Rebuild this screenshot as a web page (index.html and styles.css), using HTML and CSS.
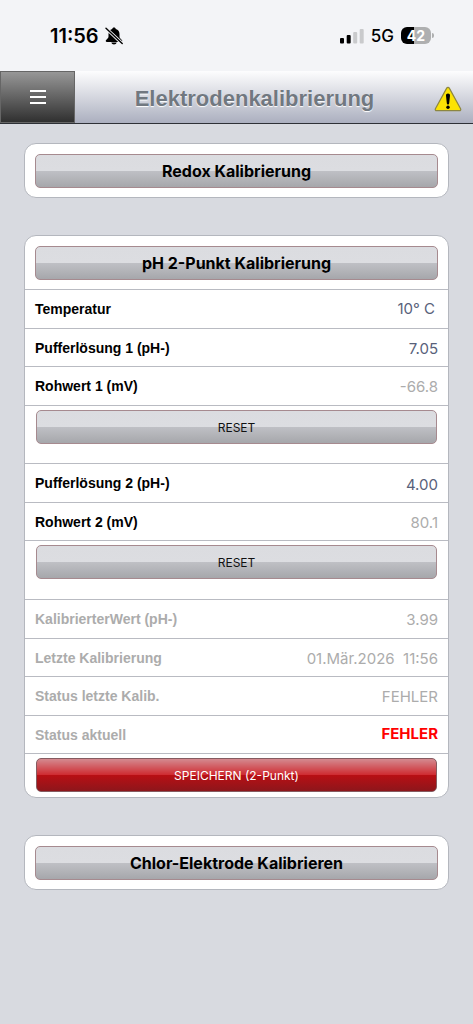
FILE: index.html
```html
<!DOCTYPE html>
<html lang="de">
<head>
<meta charset="utf-8">
<meta name="viewport" content="width=device-width, initial-scale=1">
<title>Elektrodenkalibrierung</title>
<link rel="stylesheet" href="styles.css">
</head>
<body>
<div class="status-bar">
  <div class="status-left">
    <span class="clock">11:56</span>
    <svg class="bell" width="18" height="18" viewBox="0 0 18 18" aria-hidden="true">
      <path d="M9 .6c-1 0-1.700.7-1.800 1.500C4.800 2.900 3.500 4.600 3.500 7v2.500c0 1-.5 1.600-1.300 2.500-.8.800-1.500 1.400-1.500 2.100 0 .5.4.8 1 .8h14.600c.6 0 1-.3 1-.8 0-.7-.7-1.300-1.500-2.100-.8-.9-1.300-1.500-1.300-2.500V7c0-2.400-1.300-4.100-3.700-4.900C10.700 1.300 10 .6 9 .6z"/>
      <path d="M6.300 15.500h5.400c-.3 1.300-1.400 2-2.700 2s-2.400-.7-2.700-2z"/>
      <path d="M1 1.300 17.200 16.500" stroke="#f3f4f7" stroke-width="3.200"/>
      <path d="M1 1.300 17.200 16.500" stroke="#000" stroke-width="1.400" stroke-linecap="round"/>
    </svg>
  </div>
  <div class="status-right">
    <svg width="24" height="16" viewBox="0 0 24 16" aria-hidden="true">
      <rect x="0" y="10" width="4" height="5.500" rx="1"/>
      <rect x="6.700" y="7" width="4" height="8.500" rx="1"/>
      <rect x="13.200" y="4" width="4" height="11.500" rx="1" fill="#c9cacc"/>
      <rect x="19.700" y="1" width="4" height="14.500" rx="1" fill="#c9cacc"/>
    </svg>
    <span class="network">5G</span>
    <span class="battery"><span class="charge">42</span></span>
  </div>
</div>
<header class="toolbar">
  <button class="menu" type="button" aria-label="Menü">
    <svg width="16" height="14" viewBox="0 0 16 14" aria-hidden="true">
      <path d="M0 1h16M0 7h16M0 13h16" stroke="#fff" stroke-width="2"/>
    </svg>
  </button>
  <h1>Elektrodenkalibrierung</h1>
  <a class="warning" href="#status" aria-label="Warnung">
    <svg width="28" height="26" viewBox="0 0 28 26" aria-hidden="true">
      <path d="M14 1.300c.6 0 1 .3 1.300.8l11.300 20.700c.5 1-.1 1.900-1.200 1.900H2.600c-1.100 0-1.700-.9-1.200-1.900L12.700 2.100c.3-.5.7-.8 1.300-.8z" fill="#fce303" stroke="#8c8640" stroke-width="1.200"/>
      <path d="M14 7.600c1.300 0 2.100.8 2 2.200l-.8 7.400c-.1.900-.6 1.300-1.200 1.300s-1.100-.4-1.200-1.300L12 9.800c-.1-1.400.7-2.200 2-2.200z"/>
      <circle cx="14" cy="21.200" r="1.700"/>
    </svg>
  </a>
</header>
<main class="content">
  <section class="card">
    <div class="heading"><button class="gloss title" type="button">Redox Kalibrierung</button></div>
  </section>
  <form class="card">
    <div class="heading"><button class="gloss title" type="button">pH 2-Punkt Kalibrierung</button></div>
    <div class="group">
      <div class="row">
        <label for="temp">Temperatur</label>
        <select class="value" id="temp"><option>10° C</option></select>
      </div>
      <div class="row">
        <label for="buffer1">Pufferlösung 1 (pH-)</label>
        <input class="value" id="buffer1" type="text" inputmode="decimal" value="7.05">
      </div>
      <div class="row muted-value">
        <label for="raw1">Rohwert 1 (mV)</label>
        <output class="value" id="raw1">-66.8</output>
      </div>
      <div class="row reset"><button class="gloss" type="button">RESET</button></div>
    </div>
    <div class="group">
      <div class="row">
        <label for="buffer2">Pufferlösung 2 (pH-)</label>
        <input class="value" id="buffer2" type="text" inputmode="decimal" value="4.00">
      </div>
      <div class="row muted-value">
        <label for="raw2">Rohwert 2 (mV)</label>
        <output class="value" id="raw2">80.1</output>
      </div>
      <div class="row reset"><button class="gloss" type="button">RESET</button></div>
    </div>
    <div class="group">
      <div class="row muted">
        <label for="calibrated">KalibrierterWert (pH-)</label>
        <output class="value" id="calibrated">3.99</output>
      </div>
      <div class="row muted">
        <label for="last">Letzte Kalibrierung</label>
        <output class="value" id="last">01.Mär.2026&nbsp; 11:56</output>
      </div>
      <div class="row muted">
        <label for="last-status">Status letzte Kalib.</label>
        <output class="value" id="last-status">FEHLER</output>
      </div>
      <div class="row muted">
        <label for="status">Status aktuell</label>
        <output class="value error" id="status">FEHLER</output>
      </div>
      <div class="row save"><button class="gloss red" type="submit">SPEICHERN (2-Punkt)</button></div>
    </div>
  </form>
  <section class="card">
    <div class="heading"><button class="gloss title" type="button">Chlor-Elektrode Kalibrieren</button></div>
  </section>
</main>
</body>
</html>
```
FILE: styles.css
```css
* {
  box-sizing: border-box;
}

body {
  margin: 0;
  min-height: 100vh;
  background: #d8dae0;
  color: #000;
  font-family: "Liberation Sans", Arial, sans-serif;
}

button,
input,
select {
  margin: 0;
  font: inherit;
}

.status-bar {
  display: flex;
  align-items: center;
  justify-content: space-between;
  height: 71px;
  padding: 0 42px 0 50px;
  background: #f3f4f7;
  font-family: Inter, sans-serif;
}

.status-left,
.status-right {
  display: flex;
  align-items: center;
}

.status-left {
  gap: 6px;
}

.status-right {
  gap: 7px;
}

.clock {
  font-size: 20px;
  font-weight: 600;
}

.network {
  font-size: 17px;
  font-weight: 500;
}

.battery {
  position: relative;
  width: 30px;
  height: 17px;
  border-radius: 6px;
  background: linear-gradient(90deg, #000 42%, #aeafb0 42%);
  color: #fff;
  font-size: 14px;
  font-weight: 700;
  line-height: 17px;
  text-align: center;
}

.battery::after {
  content: "";
  position: absolute;
  top: 6px;
  right: -3px;
  width: 2px;
  height: 5px;
  border-radius: 0 2px 2px 0;
  background: #aeafb0;
}

.toolbar {
  display: grid;
  grid-template-columns: 75px 1fr 39px;
  align-items: center;
  height: 53px;
  border-bottom: 1px solid #2d3036;
  background: linear-gradient(#fdfdfe, #d5d7df 50%, #abafbf);
}

.menu {
  display: flex;
  align-items: center;
  justify-content: center;
  height: 52px;
  padding: 0;
  border: 1px solid #666;
  background: linear-gradient(#979797, #303030);
}

.toolbar h1 {
  margin: 0;
  padding-top: 3px;
  color: #717880;
  font-size: 22px;
  line-height: 26px;
  text-align: center;
  text-shadow: 0 1px 1px #fff;
  white-space: nowrap;
}

.warning {
  display: flex;
  justify-content: flex-end;
  padding: 4px 11px 0 0;
}

.content {
  display: flex;
  flex-direction: column;
  gap: 37px;
  padding: 19px 24px;
}

.card {
  border: 1px solid #b4b7be;
  border-radius: 12px;
  background: #fff;
}

.heading {
  padding: 10px 10px 9px;
}

.gloss {
  display: block;
  width: 100%;
  height: 34px;
  padding: 0;
  border: 1px solid #a68a8f;
  border-radius: 5px;
  background: linear-gradient(#dbdce0, #dcdde1 50%, #bfc0c5 50%, #a6a7ab);
  color: #111;
  font-family: Inter, sans-serif;
  font-size: 12px;
}

.gloss.title {
  color: #000;
  font-size: 16px;
  font-weight: 700;
}

.gloss.red {
  border-color: #855b60;
  background: linear-gradient(#d48a90, #cf2a30 50%, #b90f14 50%, #8d161b);
  color: #fff;
}

.row {
  display: flex;
  align-items: center;
  justify-content: space-between;
  height: 38px;
  padding: 0 10px;
  border-top: 1px solid #b9bbc2;
}

.row:nth-child(odd) {
  height: 39px;
}

.row label {
  font-size: 14px;
  font-weight: 700;
}

.value {
  width: 140px;
  height: 30px;
  padding: 2px 0 0;
  border: 0;
  appearance: none;
  background: none;
  color: #58617a;
  font-family: Inter, sans-serif;
  font-size: 15px;
  line-height: 28px;
  text-align: right;
  text-align-last: right;
}

select.value {
  padding: 0 3px 0 0;
}

.muted,
.muted-value .value,
.muted .value {
  color: #acacac;
}

.muted .error {
  padding: 0;
  color: #f00;
  font-weight: 700;
}

.row.reset,
.row.save {
  align-items: flex-start;
  height: 58px;
  padding: 4px 11px;
}

.row.reset:nth-child(odd) {
  height: 59px;
}

.row.save {
  height: 44px;
}
```
